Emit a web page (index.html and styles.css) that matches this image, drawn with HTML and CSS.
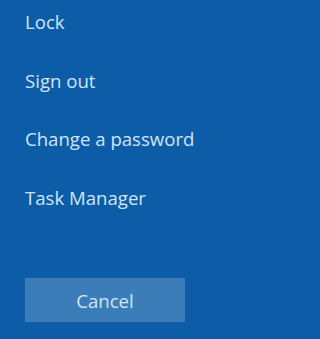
FILE: index.html
```html
<!DOCTYPE html>
<html>
<head>
<meta charset="utf-8">
<link rel="stylesheet" href="styles.css">
</head>
<body>
<div class="screen">
  <ul class="options">
    <li class="option">Lock</li>
    <li class="option">Sign out</li>
    <li class="option">Change a password</li>
    <li class="option">Task Manager</li>
  </ul>
  <button class="cancel">Cancel</button>
</div>
</body>
</html>
```

FILE: styles.css
```css
html, body {
  margin: 0;
  padding: 0;
  background: #0c5ca7;
}
.screen {
  width: 225px;
  height: 339px;
  box-sizing: border-box;
  padding: 10px 0 0 25px;
  font-family: "Open Sans", "Noto Sans", sans-serif;
  color: #d2e5f6;
  display: flex;
  flex-direction: column;
  align-items: flex-start;
}
.options {
  list-style: none;
  margin: 0;
  padding: 0;
  display: flex;
  flex-direction: column;
  gap: 34.7px;
}
.option {
  font-size: 18.6px;
  line-height: 24px;
  height: 24px;
  white-space: nowrap;
}
.cancel {
  margin-top: 68px;
  width: 160px;
  height: 44px;
  border: 0;
  padding: 0;
  background: #3b7db8;
  color: #d2e5f6;
  font-family: "Open Sans", "Noto Sans", sans-serif;
  font-size: 18.6px;
}
```
